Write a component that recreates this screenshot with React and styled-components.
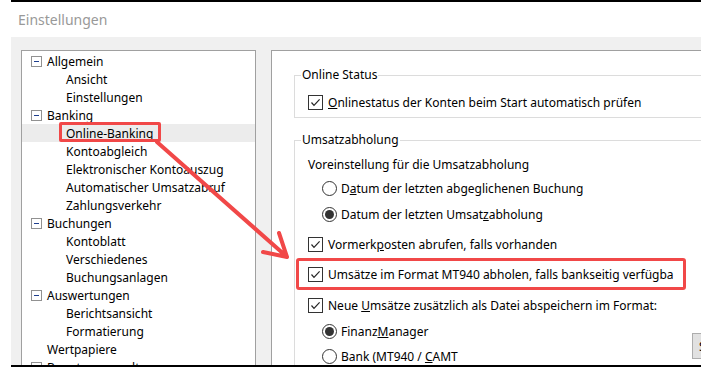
import React from 'react'
import styled, { createGlobalStyle } from 'styled-components'

const GlobalStyle = createGlobalStyle`
  html, body {
    margin: 0;
    background: #fff;
  }
  body {
    font-family: "Noto Sans", "Open Sans", sans-serif;
    font-size: 12px;
    color: #000;
  }
`

const tree = [
  { label: 'Allgemein', level: 0, open: true },
  { label: 'Ansicht', level: 1 },
  { label: 'Einstellungen', level: 1 },
  { label: 'Banking', level: 0, open: true },
  { label: 'Online-Banking', level: 1, selected: true },
  { label: 'Kontoabgleich', level: 1 },
  { label: 'Elektronischer Kontoauszug', level: 1 },
  { label: 'Automatischer Umsatzabruf', level: 1 },
  { label: 'Zahlungsverkehr', level: 1 },
  { label: 'Buchungen', level: 0, open: true },
  { label: 'Kontoblatt', level: 1 },
  { label: 'Verschiedenes', level: 1 },
  { label: 'Buchungsanlagen', level: 1 },
  { label: 'Auswertungen', level: 0, open: true },
  { label: 'Berichtsansicht', level: 1 },
  { label: 'Formatierung', level: 1 },
  { label: 'Wertpapiere', level: 0 },
  { label: 'Benutzerverwaltung', level: 0, open: true },
]

const Window = styled.div`
  position: relative;
  margin-left: 11px;
  width: 690px;
  height: 363px;
  border-top: 2px solid #000;
  border-bottom: 2px solid #000;
  overflow: hidden;
  display: flex;
  flex-direction: column;
`

const TitleBar = styled.div`
  flex: none;
  height: 35px;
  display: flex;
  align-items: center;
  padding-left: 7px;
  font-size: 14px;
  color: #999;
  background: #fff;
`

const Body = styled.div`
  flex: 1;
  min-height: 0;
  display: flex;
  gap: 15px;
  padding: 13px 0 0 10px;
  background: #f0f0f0;
  overflow: hidden;
`

const TreePanel = styled.div`
  flex: none;
  width: 233px;
  height: 400px;
  padding-top: 1px;
  background: #fff;
  border: 1px solid #a0a0a0;
  border-bottom: none;
`

const TreeRow = styled.div`
  position: relative;
  height: 18px;
  display: flex;
  align-items: center;
  gap: 5px;
  padding-left: ${p => (p.$level ? 44 : p.$expander ? 9 : 25)}px;
  background: ${p => (p.$selected ? '#ececec' : 'transparent')};
  white-space: nowrap;

  ${p => p.$selected && `
    &::after {
      content: '';
      position: absolute;
      left: 37px;
      top: -2px;
      width: 102px;
      height: 20px;
      box-sizing: border-box;
      border: 3px solid #f14848;
      border-radius: 2px;
    }
  `}
`

const Expander = styled.span`
  position: relative;
  flex: none;
  width: 9px;
  height: 9px;
  border: 1px solid #919191;
  background: #fff;

  &::before {
    content: '';
    position: absolute;
    left: 2px;
    top: 4px;
    width: 5px;
    height: 1px;
    background: #1f3f8f;
  }
`

const SettingsPanel = styled.div`
  flex: none;
  width: 460px;
  height: 400px;
  padding-left: 22px;
  background: #fff;
  border: 1px solid #a0a0a0;
  border-right: none;
  border-bottom: none;
`

const Group = styled.fieldset`
  margin: ${p => p.$top}px 0 0 0;
  padding: ${p => p.$padTop}px 0 5px 13px;
  border: 1px solid #dcdcdc;
  min-width: 0;
`

const Legend = styled.legend`
  margin-left: -7px;
  padding: 0 1px;
  line-height: 16px;
`

const Row = styled.div`
  position: relative;
  height: 20px;
  display: flex;
  align-items: center;
  margin-top: ${p => p.$gap || 0}px;
  padding-left: ${p => p.$indent || 0}px;
  white-space: nowrap;

  ${p => p.$marked && `
    &::after {
      content: '';
      position: absolute;
      left: -12px;
      top: -6px;
      width: 390px;
      height: 32px;
      box-sizing: border-box;
      border: 3px solid #f14848;
      border-radius: 3px;
    }
  `}
`

const Box = styled.span`
  flex: none;
  width: 13px;
  height: 13px;
  margin-right: 5px;
  border: 1px solid #333;
  background: #fff;
  display: flex;
  align-items: center;
  justify-content: center;
`

const Radio = styled.span`
  flex: none;
  width: 13px;
  height: 13px;
  margin-right: 4px;
  border: 1px solid #333;
  border-radius: 50%;
  background: #fff;
  display: flex;
  align-items: center;
  justify-content: center;

  &::before {
    content: '';
    width: 9px;
    height: 9px;
    border-radius: 50%;
    background: ${p => (p.$checked ? '#333' : 'transparent')};
  }
`

const Split = styled.div`
  display: flex;
  align-items: flex-start;
`

const Options = styled.div`
  flex: none;
  width: 384px;
`

const Button = styled.button`
  flex: none;
  width: 40px;
  height: 26px;
  margin-top: 18px;
  padding: 0 0 0 6px;
  text-align: left;
  font: inherit;
  background: #e1e1e1;
  border: 1px solid #adadad;
  overflow: hidden;
`

const ArrowLayer = styled.svg`
  position: absolute;
  left: 0;
  top: 0;
  pointer-events: none;
`

const Check = ({ label, ...rest }) => (
  <Row {...rest}>
    <Box>
      <svg width="11" height="11" viewBox="0 0 11 11">
        <polyline points="1.5,5.5 4,8.3 9.6,2.4" fill="none" stroke="#222" strokeWidth="1.2" />
      </svg>
    </Box>
    <span>{label}</span>
  </Row>
)

const Option = ({ label, checked, ...rest }) => (
  <Row $indent={14} {...rest}>
    <Radio $checked={checked} />
    <span>{label}</span>
  </Row>
)

export default function App() {
  return (
    <>
      <GlobalStyle />
      <Window>
        <TitleBar>Einstellungen</TitleBar>
        <Body>
          <TreePanel>
            {tree.map(item => (
              <TreeRow
                key={item.label}
                $level={item.level}
                $expander={item.open}
                $selected={item.selected}
              >
                {item.open && <Expander />}
                <span>{item.label}</span>
              </TreeRow>
            ))}
          </TreePanel>

          <SettingsPanel>
            <Group $top={16} $padTop={9}>
              <Legend>Online Status</Legend>
              <Check label={<><u>O</u>nlinestatus der Konten beim Start automatisch prüfen</>} />
            </Group>

            <Group $top={14} $padTop={6}>
              <Legend>Umsatzabholung</Legend>
              <Row>Voreinstellung für die Umsatzabholung</Row>
              <Option $gap={4} label={<>D<u>a</u>tum der letzten abgeglichenen Buchung</>} />
              <Option $gap={6} checked label={<>Datum der letzten Umsat<u>z</u>abholung</>} />
              <Check $gap={10} label={<>Vormerk<u>p</u>osten abrufen, falls vorhanden</>} />
              <Check $gap={10} $marked label="Umsätze im Format MT940 abholen, falls bankseitig verfügba" />
              <Check $gap={11} label={<>Neue <u>U</u>msätze zusätzlich als Datei abspeichern im Format:</>} />
              <Split>
                <Options>
                  <Option $gap={6} checked label={<>Finanz<u>M</u>anager</>} />
                  <Option $gap={5} label={<>Bank (MT940 / <u>C</u>AMT</>} />
                </Options>
                <Button type="button">S</Button>
              </Split>
            </Group>
          </SettingsPanel>
        </Body>

        <ArrowLayer width="690" height="363" viewBox="0 0 690 363">
          <path
            d="M146 140 L275 254 M268 231 L276 255 L252 250"
            fill="none"
            stroke="#f14848"
            strokeWidth="4"
            strokeLinecap="round"
            strokeLinejoin="round"
          />
        </ArrowLayer>
      </Window>
    </>
  )
}
